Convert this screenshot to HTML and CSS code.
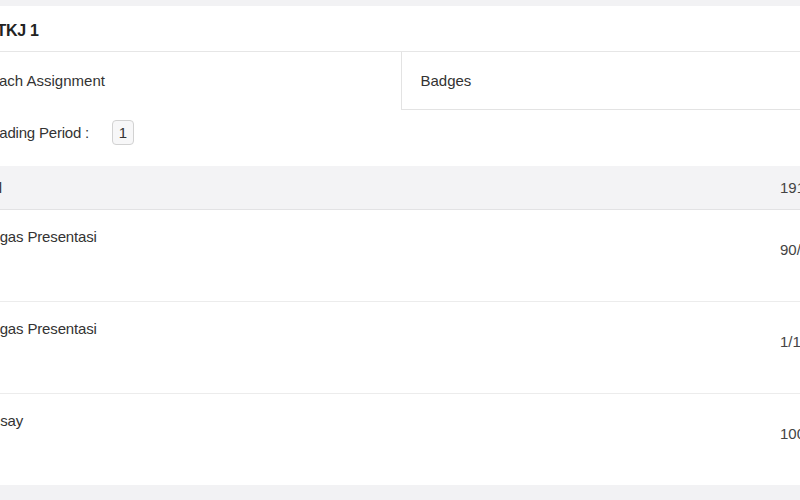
FILE: index.html
```html
<!DOCTYPE html>
<html lang="id">
<head>
<meta charset="utf-8">
<title>X TKJ 1</title>
<link rel="stylesheet" href="styles.css">
</head>
<body>
<div class="viewport">
  <div class="card">
    <h1 class="title">X TKJ 1</h1>
    <div class="tabs">
      <div class="tab tab--active">Each Assignment</div>
      <div class="tab">Badges</div>
    </div>
    <div class="period">
      <span class="period-label">Grading Period :</span>
      <span class="period-box">1</span>
    </div>
    <div class="row row--total">
      <span class="label">Total</span>
      <span class="score">191</span>
    </div>
    <div class="row">
      <span class="label">Tugas Presentasi</span>
      <span class="score">90/100</span>
    </div>
    <div class="row">
      <span class="label">Tugas Presentasi</span>
      <span class="score">1/100</span>
    </div>
    <div class="row row--last">
      <span class="label">Essay</span>
      <span class="score">100/100</span>
    </div>
  </div>
</div>
</body>
</html>
```

FILE: styles.css
```css
* { box-sizing: border-box; }

html, body {
  margin: 0;
  padding: 0;
  background: #f2f2f4;
  font-family: "Liberation Sans", Arial, sans-serif;
  color: #333;
}

.viewport {
  width: 800px;
  height: 500px;
  overflow: hidden;
  padding-top: 6px;
}

.card {
  width: 862px;
  margin-left: -30px;
  background: #fff;
}

.title {
  margin: 0;
  height: 46px;
  padding: 5px 0 0 12px;
  line-height: 40px;
  font-size: 16px;
  letter-spacing: -0.3px;
  font-weight: bold;
  color: #222;
  border-bottom: 1px solid #e6e6e6;
}

.tabs {
  display: flex;
}

.tab {
  flex: 1;
  height: 58px;
  line-height: 57px;
  padding-left: 19px;
  font-size: 15px;
  color: #333;
  border-left: 1px solid #e3e3e3;
  border-bottom: 1px solid #e3e3e3;
}

.tab--active {
  border-left: none;
  border-bottom-color: transparent;
}

.period {
  display: flex;
  align-items: center;
  gap: 23px;
  padding: 10px 0 21px 13px;
  font-size: 15px;
}

.period-label {
  letter-spacing: -0.2px;
}

.period-box {
  display: inline-flex;
  align-items: center;
  justify-content: center;
  width: 22px;
  height: 25px;
  border: 1px solid #d2d2d2;
  border-radius: 4px;
  background: #f7f7f8;
  font-size: 15px;
  color: #333;
}

.row {
  display: grid;
  grid-template-columns: 1fr 52px;
  align-items: start;
  height: 92px;
  padding: 18px 0 0 13px;
  border-bottom: 1px solid #ececec;
  font-size: 15px;
  line-height: 18px;
}

.row .label {
  letter-spacing: -0.15px;
}

.row .score {
  padding-top: 13px;
  white-space: nowrap;
  color: #444;
}

.row--total {
  height: 44px;
  padding: 0 0 0 1px;
  align-items: center;
  background: #f3f3f5;
  border-bottom-color: #e2e2e4;
}

.row--total .score {
  padding-top: 0;
}

.row--last {
  height: 91px;
  border-bottom: none;
}
```
